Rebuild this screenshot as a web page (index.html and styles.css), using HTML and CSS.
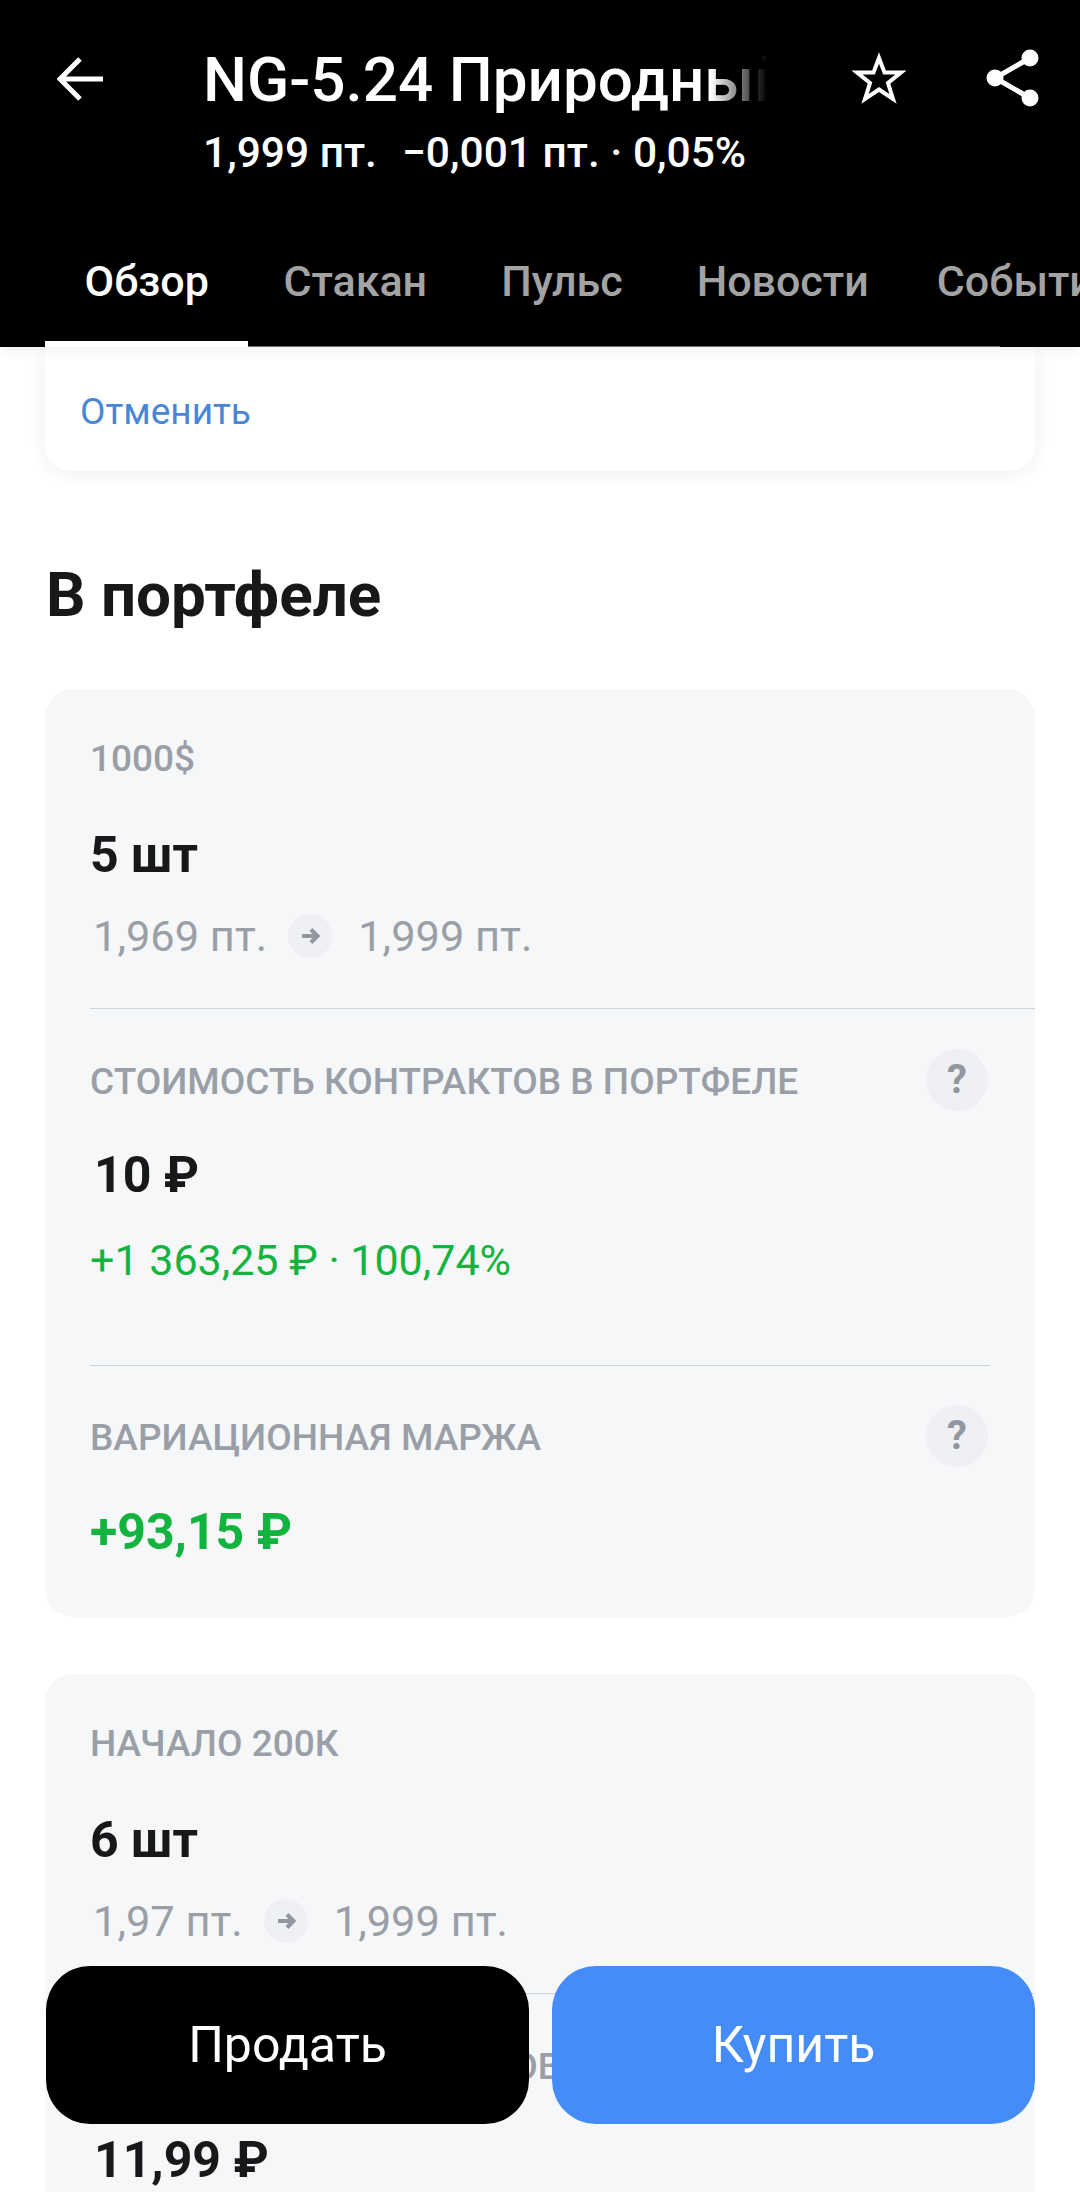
FILE: index.html
```html
<!DOCTYPE html>
<html lang="ru">
<head>
  <meta charset="UTF-8" />
  <meta name="viewport" content="width=device-width, initial-scale=1.0" />
  <title>NG-5.24 Природный газ</title>
  <link rel="stylesheet" href="styles.css">
</head>
<body>
  <div class="screen">
    <header class="header">
      <div class="topbar">
        <svg class="back" width="46" height="44" viewBox="0 0 46 44">
          <path d="M23 2 3 22l20 20M3 22h43" fill="none" stroke="#fff" stroke-width="5"/>
        </svg>
        <div class="heading">
          <div class="title">NG-5.24 Природный газ</div>
          <div class="subtitle"><span>1,999 пт.</span><span>−0,001 пт. · 0,05%</span></div>
        </div>
        <svg class="star" width="56" height="52" viewBox="0 0 56 52">
          <path d="M28 6 33.500 20.500 50 20.500 37 31 42 47 28 37.500 14 47 19 31 6 20.500 22.500 20.500Z" fill="none" stroke="#fff" stroke-width="4"/>
        </svg>
        <svg class="share" width="54" height="58" viewBox="0 0 54 58">
          <path d="M44 9 9 29l35 20" fill="none" stroke="#fff" stroke-width="5"/>
          <circle cx="44" cy="9" r="8.500" fill="#fff"/>
          <circle cx="9" cy="29" r="8.500" fill="#fff"/>
          <circle cx="44" cy="49" r="8.500" fill="#fff"/>
        </svg>
      </div>
      <nav class="tabs">
        <a class="tab active">Обзор</a>
        <a class="tab">Стакан</a>
        <a class="tab">Пульс</a>
        <a class="tab">Новости</a>
        <a class="tab">События</a>
      </nav>
    </header>

    <main class="content">
      <div class="order-card">
        <a class="cancel">Отменить</a>
      </div>

      <h2 class="section-title">В портфеле</h2>

      <div class="card">
        <div class="name">1000$</div>
        <div class="qty">5 шт</div>
        <div class="prices">
          <span>1,969 пт.</span>
          <svg class="arrow" width="44" height="44" viewBox="0 0 44 44">
            <circle cx="22" cy="22" r="22" fill="#eef0f3"/>
            <path d="M14 22h15M23 15.500l6.500 6.500-6.500 6.500" fill="none" stroke="#92969f" stroke-width="4"/>
          </svg>
          <span>1,999 пт.</span>
        </div>
        <div class="block first">
          <div class="label-row">
            <span class="label">СТОИМОСТЬ КОНТРАКТОВ В ПОРТФЕЛЕ</span>
            <span class="help">?</span>
          </div>
          <div class="value">10 ₽</div>
          <div class="change">+1 363,25 ₽ · 100,74%</div>
        </div>
        <div class="block second">
          <div class="label-row">
            <span class="label">ВАРИАЦИОННАЯ МАРЖА</span>
            <span class="help">?</span>
          </div>
          <div class="value green">+93,15 ₽</div>
        </div>
      </div>

      <div class="card">
        <div class="name">НАЧАЛО 200К</div>
        <div class="qty">6 шт</div>
        <div class="prices">
          <span>1,97 пт.</span>
          <svg class="arrow" width="44" height="44" viewBox="0 0 44 44">
            <circle cx="22" cy="22" r="22" fill="#eef0f3"/>
            <path d="M14 22h15M23 15.500l6.500 6.500-6.500 6.500" fill="none" stroke="#92969f" stroke-width="4"/>
          </svg>
          <span>1,999 пт.</span>
        </div>
        <div class="block first">
          <div class="label-row">
            <span class="label">СТОИМОСТЬ КОНТРАКТОВ В ПОРТФЕЛЕ</span>
            <span class="help">?</span>
          </div>
          <div class="value">11,99 ₽</div>
        </div>
      </div>
    </main>

    <div class="actions">
      <button class="btn sell">Продать</button>
      <button class="btn buy">Купить</button>
    </div>
  </div>
</body>
</html>
```

FILE: styles.css
```css
* {
  box-sizing: border-box;
}
body {
  margin: 0;
  background-color: #fff;
  font-family: Roboto, "Noto Sans", sans-serif;
}
.screen {
  position: relative;
  width: 1080px;
  height: 2192px;
  overflow: hidden;
}

/* header */
.header {
  position: relative;
  z-index: 2;
  height: 347px;
  background-color: #000;
  color: #fff;
  box-shadow: 0 2px 12px rgba(0, 0, 0, 0.08);
}
.topbar {
  display: flex;
  align-items: flex-start;
  height: 231px;
  padding-left: 57px;
}
.back {
  flex: none;
  margin-top: 57px;
}
.heading {
  flex: none;
  width: 564px;
  margin: 45px 0 0 100px;
}
.title {
  font-size: 62px;
  line-height: 70px;
  font-weight: 500;
  white-space: nowrap;
  overflow: hidden;
  -webkit-mask-image: linear-gradient(to right, #000 90%, transparent 100%);
  mask-image: linear-gradient(to right, #000 90%, transparent 100%);
}
.subtitle {
  display: flex;
  gap: 25px;
  margin-top: 13px;
  font-size: 42.500px;
  line-height: 50px;
  font-weight: 500;
  white-space: nowrap;
}
.star {
  flex: none;
  margin: 52px 0 0 84px;
}
.share {
  flex: none;
  margin: 49px 0 0 79px;
}
.tabs {
  display: flex;
  height: 116px;
  padding-left: 45px;
  white-space: nowrap;
  background: linear-gradient(#6e6e6e, #6e6e6e) 78px 100% / 922px 1px no-repeat;
}
.tab {
  padding: 0 37px;
  font-size: 43px;
  line-height: 100px;
  font-weight: 500;
  color: #a3a3a3;
}
.tab.active {
  padding: 0 39.500px;
  margin-right: -2px;
  color: #fff;
  box-shadow: inset 0 -6px 0 #fff;
}
.tab:last-child {
  margin-left: -6px;
}

/* content */
.content {
  padding: 0 45px;
}
.order-card {
  height: 124px;
  padding: 43px 35px 0;
  background-color: #fff;
  border-radius: 0 0 26px 26px;
  box-shadow: 0 2px 18px rgba(0, 0, 0, 0.07);
}
.cancel {
  font-size: 37px;
  line-height: 44px;
  color: #4a86d6;
}
.section-title {
  margin: 90px 0 60px 1px;
  font-size: 62px;
  line-height: 68px;
  font-weight: 700;
  color: #17181a;
}
.card {
  margin-bottom: 57px;
  padding: 50px 0 55px 45px;
  background-color: #f5f7f9;
  border-radius: 28px;
}
.name, .label {
  font-size: 37px;
  line-height: 40px;
  font-weight: 500;
  color: #9a9fa7;
}
.qty {
  margin-top: 48px;
  font-size: 50px;
  line-height: 56px;
  font-weight: 700;
  color: #17181a;
}
.prices {
  display: flex;
  align-items: center;
  gap: 22px;
  margin: 26px 0 0 3px;
  font-size: 43.400px;
  line-height: 56px;
  color: #9a9fa7;
}
.arrow {
  margin: -3px 4px 0 -1px;
}
.block {
  border-top: 1px solid #d0d3d8;
}
.block.first {
  margin-top: 43px;
  padding: 42px 0 77px;
}
.block.second {
  margin-right: 45px;
  padding-top: 41px;
}
.label-row {
  display: flex;
  align-items: center;
  justify-content: space-between;
  height: 62px;
  padding-right: 47px;
}
.block.second .label-row {
  padding-right: 2px;
}
.help {
  width: 62px;
  height: 62px;
  margin-top: -4px;
  border-radius: 50%;
  background-color: #eef0f3;
  font-size: 40px;
  line-height: 62px;
  font-weight: 700;
  text-align: center;
  color: #92969f;
}
.value {
  margin: 32px 0 0 4px;
  font-size: 50px;
  line-height: 60px;
  font-weight: 700;
  color: #17181a;
}
.value.green {
  margin: 33px 0 0;
  color: #13b33f;
}
.change {
  margin-top: 27px;
  font-size: 43px;
  line-height: 56px;
  color: #13b33f;
}

/* buttons over the scrolled content */
.actions {
  position: absolute;
  left: 46px;
  right: 45px;
  top: 1966px;
  z-index: 1;
  display: flex;
  gap: 23px;
}
.btn {
  flex: 1;
  height: 158px;
  border: 0;
  border-radius: 44px;
  font-family: inherit;
  font-size: 50px;
  color: #fff;
}
.sell {
  background-color: #000;
}
.buy {
  background-color: #468cf8;
}
```
